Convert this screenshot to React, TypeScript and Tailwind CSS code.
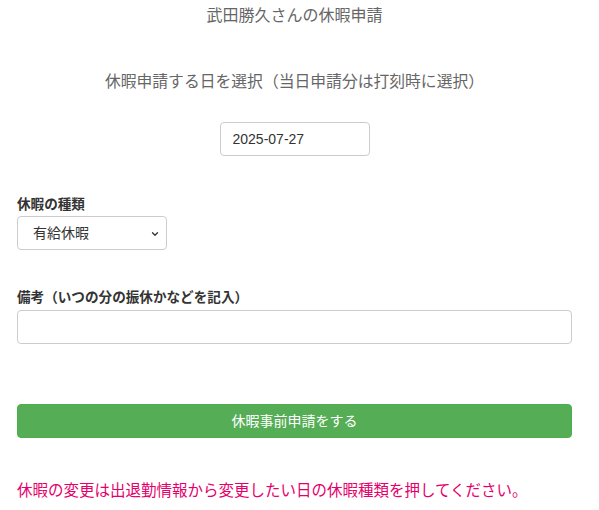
import { ChevronDown } from "lucide-react";

const font = "font-['Liberation_Sans','Noto_Sans_CJK_JP',sans-serif]";

export default function App() {
  return (
    <div className={`${font} min-h-[510px] bg-white pl-[17px] pr-[27px]`}>
      <h1 className="pt-[6px] text-center text-[16px] leading-[20px] font-normal text-[#666]">
        武田勝久さんの休暇申請
      </h1>

      <h2 className="mt-[44px] text-center text-[15.8px] leading-[24px] font-normal text-[#666]">
        休暇申請する日を選択（当日申請分は打刻時に選択）
      </h2>

      <div className="mt-[28px] flex justify-center">
        <input
          type="text"
          readOnly
          value="2025-07-27"
          className="h-[34px] w-[150px] rounded-[4px] border border-[#ccc] pl-[12px] text-[14px] text-[#333] outline-none"
        />
      </div>

      <label className="mt-[39px] block text-[13.6px] leading-[20px] font-bold text-[#333]">
        休暇の種類
      </label>
      <div className="relative mt-[1px] h-[34px] w-[150px] rounded-[4px] border border-[#ccc] bg-white">
        <div className="flex h-full items-center pl-[15px] text-[14px] text-[#333]">有給休暇</div>
        <ChevronDown className="absolute right-[6px] top-[12px] h-[10px] w-[10px] text-[#333]" strokeWidth={3} />
      </div>

      <label className="mt-[38px] block text-[13.6px] leading-[20px] font-bold text-[#333]">
        備考（いつの分の振休かなどを記入）
      </label>
      <input
        type="text"
        className="mt-[2px] block h-[34px] w-full rounded-[4px] border border-[#ccc] px-[12px] text-[14px] outline-none"
      />

      <button className="mt-[60px] flex h-[34px] w-full items-center justify-center rounded-[4px] border border-[#4cae4c] bg-[#55ae55] text-[14px] text-white">
        休暇事前申請をする
      </button>

      <p className="mt-[41px] text-[15.5px] leading-[24px] text-[#e6006b]">
        休暇の変更は出退勤情報から変更したい日の休暇種類を押してください。
      </p>
    </div>
  );
}
